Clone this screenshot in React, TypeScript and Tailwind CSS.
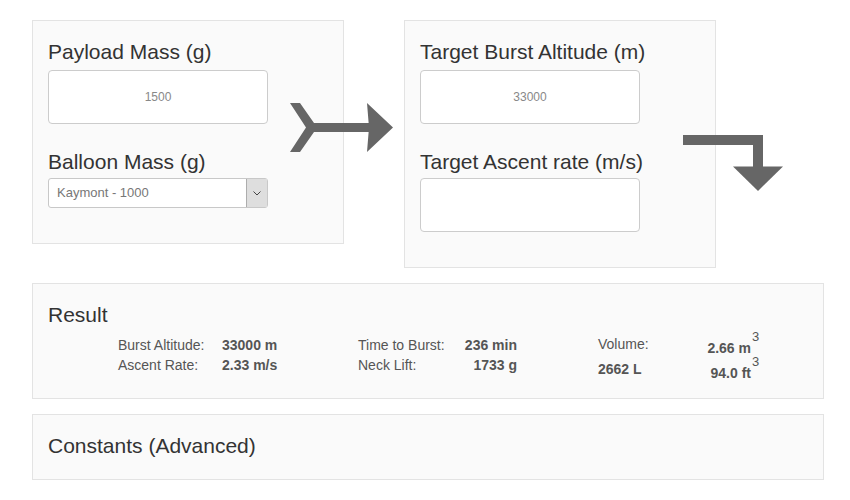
import React from 'react'

const FONT = "font-['Liberation_Sans','Arial',sans-serif]"

function Panel({ children, className = '' }: { children: React.ReactNode; className?: string }) {
  return (
    <div className={`border border-[#e3e3e3] bg-[#fafafa] ${className}`}>
      {children}
    </div>
  )
}

function Label({ children, className = '' }: { children: React.ReactNode; className?: string }) {
  return <div className={`text-[21px] leading-[22px] text-[#333] ${className}`}>{children}</div>
}

function NumberBox({ value }: { value?: string }) {
  return (
    <div className="flex h-[54px] w-[220px] items-center justify-center rounded-[4px] border border-[#ccc] bg-white text-[12px] text-[#888]">
      {value}
    </div>
  )
}

function Stat({ label, value }: { label: string; value: string }) {
  return (
    <>
      <div className="whitespace-nowrap">{label}</div>
      <div className="whitespace-nowrap font-bold">{value}</div>
    </>
  )
}

function Cubed({ value }: { value: string }) {
  return (
    <div className="text-right font-bold">
      <span className="relative">
        {value}
        <span className="absolute left-full top-[-10px] pl-[1px] text-[13px] font-normal leading-none">3</span>
      </span>
    </div>
  )
}

export default function App() {
  return (
    <div className={`relative h-[500px] w-[850px] bg-white ${FONT}`}>
      <div className="w-[824px] pl-[32px] pt-[20px]">
        <div className="flex items-start gap-[60px]">
          {/* inputs */}
          <Panel className="w-[312px] px-[15px] pt-[20px] pb-[35px]">
            <Label className="mb-[7px]">Payload Mass (g)</Label>
            <NumberBox value="1500" />
            <Label className="mt-[27px] mb-[5px]">Balloon Mass (g)</Label>
            <div className="flex h-[30px] w-[220px] items-center rounded-[3px] border border-[#c8c8c8] bg-white">
              <span className="flex-1 pl-[8px] text-[13px] text-[#777]">Kaymont - 1000</span>
              <span className="flex h-[28px] w-[21px] items-center justify-center border-l border-[#adadad] bg-[#dedede]">
                <svg width="8" height="5" viewBox="0 0 8 5">
                  <path d="M0.5 0.5 L4 4 L7.5 0.5" fill="none" stroke="#444" strokeWidth="1" />
                </svg>
              </span>
            </div>
          </Panel>

          <Panel className="w-[312px] px-[15px] pt-[20px] pb-[35px]">
            <Label className="mb-[7px]">Target Burst Altitude (m)</Label>
            <NumberBox value="33000" />
            <Label className="mt-[27px] mb-[5px]">Target Ascent rate (m/s)</Label>
            <NumberBox />
          </Panel>
        </div>

        {/* result */}
        <Panel className="mt-[15px] h-[116px] px-[15px] pt-[20px]">
          <div className="text-[21px] leading-[22px] text-[#333]">Result</div>
          <div className="mt-[9px] flex items-start text-[14px] leading-[20px] text-[#555]">
            <div className="ml-[70px] grid grid-cols-[104px_56px]">
              <Stat label="Burst Altitude:" value="33000 m" />
              <Stat label="Ascent Rate:" value="2.33 m/s" />
            </div>
            <div className="ml-[80px] grid grid-cols-[82px_77px] [&>*:nth-child(even)]:text-right">
              <Stat label="Time to Burst:" value="236 min" />
              <Stat label="Neck Lift:" value="1733 g" />
            </div>
            <div className="-mt-[3px] ml-[81px] flex items-start leading-[25px]">
              <div className="w-[82px]">
                <div>Volume:</div>
                <div className="font-bold">2662 L</div>
              </div>
              <div className="w-[71px] pt-[4px]">
                <Cubed value="2.66 m" />
                <Cubed value="94.0 ft" />
              </div>
            </div>
          </div>
        </Panel>

        <Panel className="mt-[15px] h-[66px] px-[15px] pt-[20px]">
          <div className="text-[21px] leading-[22px] text-[#333]">Constants (Advanced)</div>
        </Panel>
      </div>

      {/* flow arrows */}
      <svg className="absolute left-[286px] top-[100px]" width="110" height="56" viewBox="286 100 110 56">
        <polygon points="290,103 300,103 314,123 370,123 370,132 314,132 300,152 290,152 306,127.5" fill="#666" />
        <polygon points="367,103 393,127.5 367,152 369,127.5" fill="#666" />
      </svg>
      <svg className="absolute left-[680px] top-[132px]" width="106" height="62" viewBox="680 132 106 62">
        <rect x="683" y="135" width="80" height="10" fill="#666" />
        <rect x="753" y="135" width="10" height="36" fill="#666" />
        <polygon points="733,166.5 783,166.5 758,191" fill="#666" />
      </svg>
    </div>
  )
}
